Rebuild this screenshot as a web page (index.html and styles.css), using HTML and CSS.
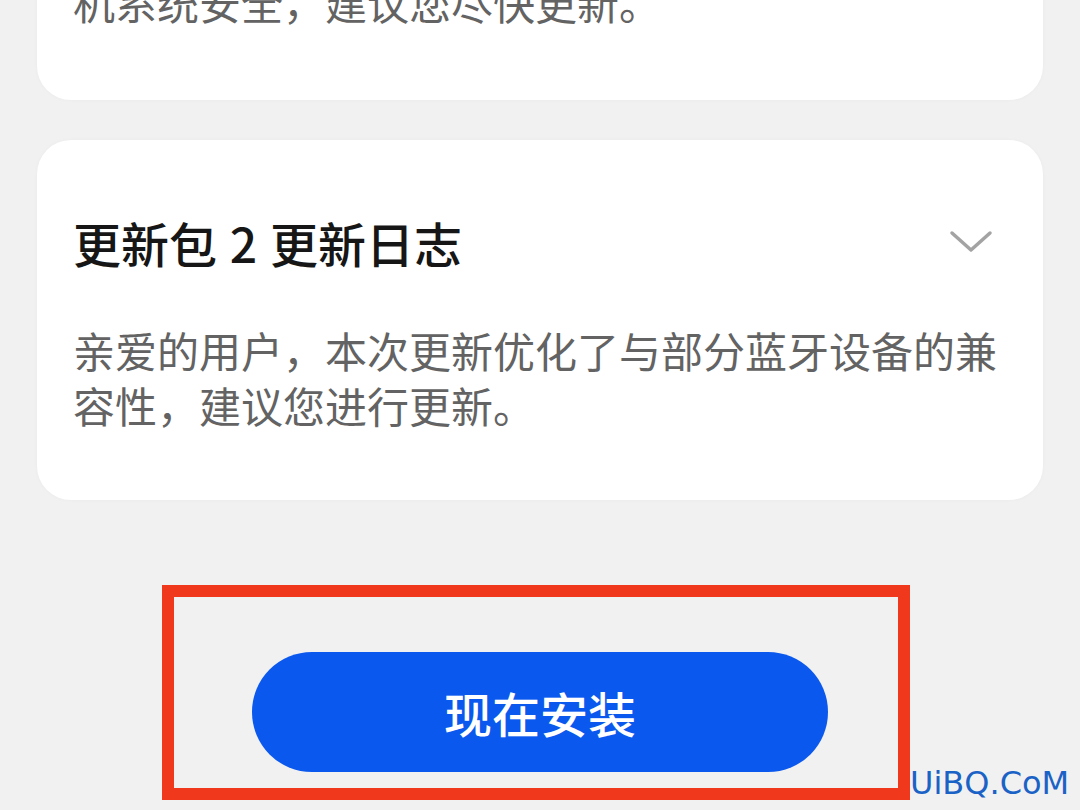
FILE: index.html
```html
<!DOCTYPE html>
<html lang="zh-CN">
<head>
    <meta charset="UTF-8">
    <meta name="viewport" content="width=device-width, initial-scale=1.0">
    <title>系统更新</title>
    <link rel="stylesheet" href="styles.css">
</head>
<body>
    <div class="update-list">
        <div class="card card-first">
            <p class="log-text">机系统安全，建议您尽快更新。</p>
        </div>

        <div class="card">
            <div class="card-head">
                <h2 class="log-title">更新包 2 更新日志</h2>
                <svg class="chevron" width="44" height="24" viewBox="0 0 44 24">
                    <polyline points="3,3 22,20 41,3" fill="none" stroke="#a3a3a3" stroke-width="3.5" stroke-linecap="round" stroke-linejoin="round"/>
                </svg>
            </div>
            <p class="log-text">亲爱的用户，本次更新优化了与部分蓝牙设备的兼容性，建议您进行更新。</p>
        </div>
    </div>

    <div class="install-area">
        <div class="highlight-box">
            <button class="install-button">现在安装</button>
        </div>
    </div>

    <div class="watermark">UiBQ.CoM</div>
</body>
</html>
```

FILE: styles.css
```css
body, html {
    margin: 0;
    height: 100%;
    overflow: hidden;
    background-color: #f1f1f1;
    font-family: "Noto Sans CJK SC", "Noto Sans", sans-serif;
}

.update-list {
    display: flex;
    flex-direction: column;
    gap: 40px;
    padding: 0 37px;
    margin-top: -66px; /* list is scrolled, first card cut off */
}

.card {
    background-color: #ffffff;
    border-radius: 34px;
    padding: 74px 46px 68px 36px;
    box-shadow: 0 0 4px rgba(0, 0, 0, 0.03);
}

.card-first {
    padding: 40px 46px 71px 36px;
}

.card-head {
    display: flex;
    justify-content: space-between;
    align-items: flex-start;
    margin-bottom: 52px;
}

.log-title {
    margin: 0;
    font-size: 48px;
    line-height: 56px;
    font-weight: 500;
    word-spacing: 2px;
    color: #161616;
}

.chevron {
    margin-top: 16px;
    margin-right: 4px;
}

.log-text {
    margin: 0;
    font-size: 42px;
    line-height: 55px;
    color: #636363;
}

.install-area {
    display: flex;
    padding-left: 162px;
    margin-top: 85px;
}

.highlight-box {
    border: 12px solid #f0391c;
    padding: 55px 70px 16px 78px;
}

.install-button {
    display: block;
    width: 576px;
    height: 120px;
    border: none;
    border-radius: 60px;
    background-color: #0a58ee;
    color: #ffffff;
    font-family: "Noto Sans CJK SC", sans-serif;
    font-size: 48px;
    font-weight: 500;
    padding: 0;
}

.watermark {
    position: absolute;
    left: 910px;
    top: 764px;
    font-family: "DejaVu Sans", sans-serif;
    font-size: 32px;
    color: #1a62c6;
}
```
